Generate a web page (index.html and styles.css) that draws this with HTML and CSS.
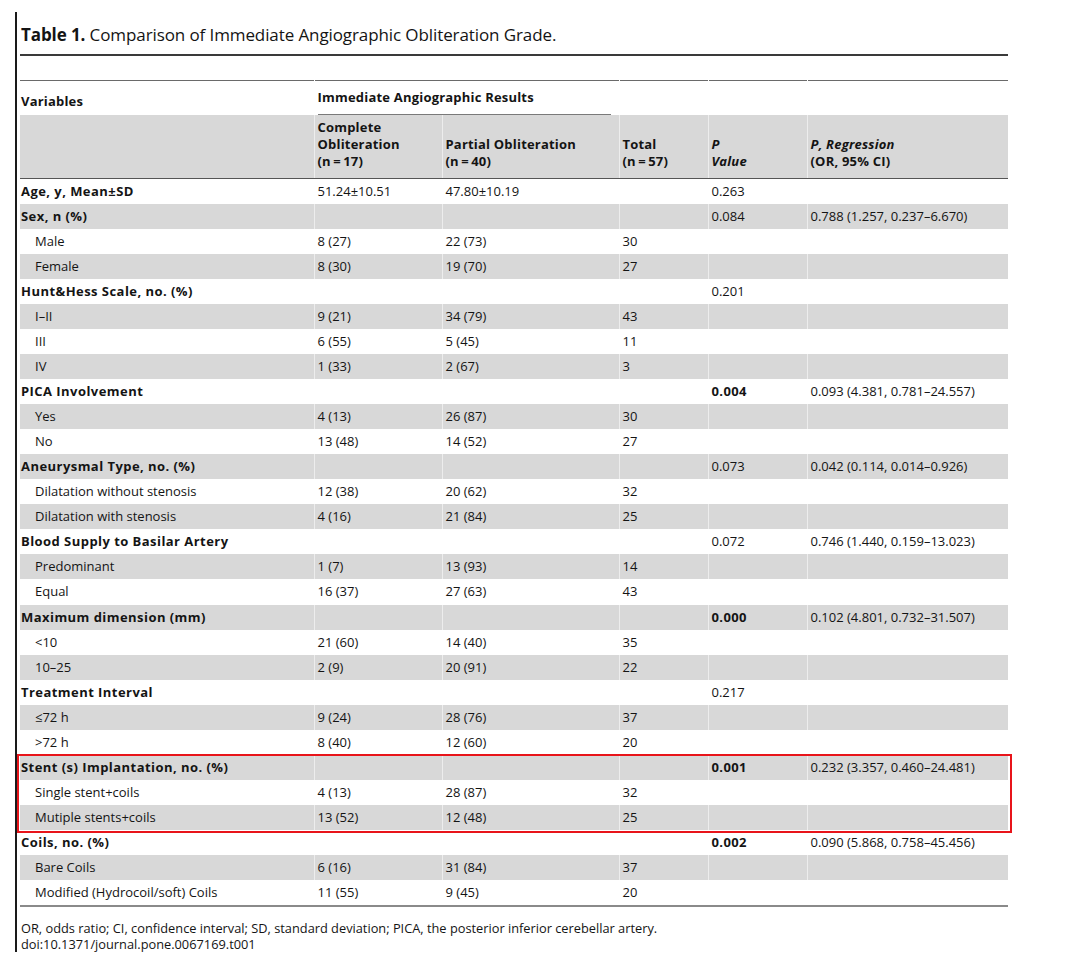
FILE: index.html
```html
<!DOCTYPE html>
<html>
<head>
<meta charset="utf-8">
<link rel="stylesheet" href="styles.css">
</head>
<body>
<div class="page">
  <div class="title"><b>Table 1.</b> Comparison of Immediate Angiographic Obliteration Grade.</div>
  <div class="title-rule"></div>
  <div class="table-wrap">
  <table class="data">
    <colgroup>
      <col class="c1"><col class="c2"><col class="c3"><col class="c4"><col class="c5"><col class="c6">
    </colgroup>
    <thead>
      <tr class="h1">
        <th class="var-head">Variables</th>
        <th colspan="2" class="group-head"><div class="group-label">Immediate Angiographic Results</div></th>
        <th></th><th></th><th></th>
      </tr>
      <tr class="h2">
        <th></th>
        <th>Complete<br>Obliteration<br>(n&thinsp;=&thinsp;17)</th>
        <th>Partial Obliteration<br>(n&thinsp;=&thinsp;40)</th>
        <th>Total<br>(n&thinsp;=&thinsp;57)</th>
        <th><i>P</i><br><i>Value</i></th>
        <th><i>P, Regression</i><br>(OR, 95% CI)</th>
      </tr>
    </thead>
    <tbody>
      <tr><td class="cat">Age, y, Mean±SD</td><td>51.24±10.51</td><td>47.80±10.19</td><td></td><td>0.263</td><td></td></tr>
      <tr><td class="cat">Sex, n (%)</td><td></td><td></td><td></td><td>0.084</td><td>0.788 (1.257, 0.237–6.670)</td></tr>
      <tr><td class="sub">Male</td><td>8 (27)</td><td>22 (73)</td><td>30</td><td></td><td></td></tr>
      <tr><td class="sub">Female</td><td>8 (30)</td><td>19 (70)</td><td>27</td><td></td><td></td></tr>
      <tr><td class="cat">Hunt&amp;Hess Scale, no. (%)</td><td></td><td></td><td></td><td>0.201</td><td></td></tr>
      <tr><td class="sub">I–II</td><td>9 (21)</td><td>34 (79)</td><td>43</td><td></td><td></td></tr>
      <tr><td class="sub">III</td><td>6 (55)</td><td>5 (45)</td><td>11</td><td></td><td></td></tr>
      <tr><td class="sub">IV</td><td>1 (33)</td><td>2 (67)</td><td>3</td><td></td><td></td></tr>
      <tr><td class="cat">PICA Involvement</td><td></td><td></td><td></td><td><b>0.004</b></td><td>0.093 (4.381, 0.781–24.557)</td></tr>
      <tr><td class="sub">Yes</td><td>4 (13)</td><td>26 (87)</td><td>30</td><td></td><td></td></tr>
      <tr><td class="sub">No</td><td>13 (48)</td><td>14 (52)</td><td>27</td><td></td><td></td></tr>
      <tr><td class="cat">Aneurysmal Type, no. (%)</td><td></td><td></td><td></td><td>0.073</td><td>0.042 (0.114, 0.014–0.926)</td></tr>
      <tr><td class="sub">Dilatation without stenosis</td><td>12 (38)</td><td>20 (62)</td><td>32</td><td></td><td></td></tr>
      <tr><td class="sub">Dilatation with stenosis</td><td>4 (16)</td><td>21 (84)</td><td>25</td><td></td><td></td></tr>
      <tr><td class="cat">Blood Supply to Basilar Artery</td><td></td><td></td><td></td><td>0.072</td><td>0.746 (1.440, 0.159–13.023)</td></tr>
      <tr><td class="sub">Predominant</td><td>1 (7)</td><td>13 (93)</td><td>14</td><td></td><td></td></tr>
      <tr><td class="sub">Equal</td><td>16 (37)</td><td>27 (63)</td><td>43</td><td></td><td></td></tr>
      <tr><td class="cat">Maximum dimension (mm)</td><td></td><td></td><td></td><td><b>0.000</b></td><td>0.102 (4.801, 0.732–31.507)</td></tr>
      <tr><td class="sub">&lt;10</td><td>21 (60)</td><td>14 (40)</td><td>35</td><td></td><td></td></tr>
      <tr><td class="sub">10–25</td><td>2 (9)</td><td>20 (91)</td><td>22</td><td></td><td></td></tr>
      <tr><td class="cat">Treatment Interval</td><td></td><td></td><td></td><td>0.217</td><td></td></tr>
      <tr><td class="sub">≤72 h</td><td>9 (24)</td><td>28 (76)</td><td>37</td><td></td><td></td></tr>
      <tr><td class="sub">&gt;72 h</td><td>8 (40)</td><td>12 (60)</td><td>20</td><td></td><td></td></tr>
      <tr><td class="cat">Stent (s) Implantation, no. (%)</td><td></td><td></td><td></td><td><b>0.001</b></td><td>0.232 (3.357, 0.460–24.481)</td></tr>
      <tr><td class="sub">Single stent+coils</td><td>4 (13)</td><td>28 (87)</td><td>32</td><td></td><td></td></tr>
      <tr><td class="sub">Mutiple stents+coils</td><td>13 (52)</td><td>12 (48)</td><td>25</td><td></td><td></td></tr>
      <tr><td class="cat">Coils, no. (%)</td><td></td><td></td><td></td><td><b>0.002</b></td><td>0.090 (5.868, 0.758–45.456)</td></tr>
      <tr><td class="sub">Bare Coils</td><td>6 (16)</td><td>31 (84)</td><td>37</td><td></td><td></td></tr>
      <tr><td class="sub">Modified (Hydrocoil/soft) Coils</td><td>11 (55)</td><td>9 (45)</td><td>20</td><td></td><td></td></tr>
    </tbody>
  </table>
  <div class="highlight"></div>
  </div>
  <div class="notes">
    <div>OR, odds ratio; CI, confidence interval; SD, standard deviation; PICA, the posterior inferior cerebellar artery.</div>
    <div>doi:10.1371/journal.pone.0067169.t001</div>
  </div>
</div>
</body>
</html>
```

FILE: styles.css
```css
html, body {
  margin: 0;
  padding: 0;
  background: #fff;
}
body {
  font-family: "Open Sans", "Liberation Sans", sans-serif;
  color: #141414;
}
.page {
  margin: 12px 0 0 15px;
  border-left: 2px solid #1a1a1a;
  padding-left: 3px;
  width: 988px;
}
.title {
  font-size: 17px;
  line-height: 22px;
  padding-top: 12px;
  padding-left: 1px;
  letter-spacing: -0.1px;
}
.title b { font-weight: 700; }
.title-rule {
  margin-top: 8px;
  height: 2px;
  background: #3a3a3a;
}
.table-wrap {
  position: relative;
  margin-top: 24px;
}
.data {
  width: 988px;
  border-collapse: collapse;
  table-layout: fixed;
  font-size: 13px;
  border-top: 1px solid #6a6a6a;
  border-bottom: 2px solid #8a8a8a;
}
.c1 { width: 294px; }
.c2 { width: 128px; }
.c3 { width: 177px; }
.c4 { width: 89px; }
.c5 { width: 99px; }
.c6 { width: 201px; }
.data th, .data td {
  padding: 0 0 0 3px;
  text-align: left;
  white-space: nowrap;
}
.data td + td, .data th + th {
  border-left: 1px solid rgba(255,255,255,0.55);
}
.h1 { height: 34px; }
.h1 th {
  font-weight: 700;
  vertical-align: top;
  letter-spacing: 0.2px;
}
.var-head {
  padding-top: 12px !important;
  padding-left: 1px !important;
  line-height: 17px;
}
.group-head {
  padding-top: 8px !important;
}
.group-label {
  border-bottom: 1px solid #7a7a7a;
  padding-bottom: 8px;
  margin-right: 8px;
  line-height: 17px;
}
.h2 { height: 63px; }
.h2 th {
  background: #d8d8d8;
  vertical-align: bottom;
  padding-bottom: 8px;
  line-height: 17px;
  font-weight: 700;
  letter-spacing: 0.2px;
  border-bottom: 1px solid #555;
}
.data tbody tr { height: 25.07px; }
.data tbody td {
  line-height: 25px;
  padding-top: 0;
  padding-bottom: 0;
}
.data tbody tr:nth-child(even) td {
  background: #d8d8d8;
}
.data td.cat {
  font-weight: 700;
  padding-left: 1px;
  letter-spacing: 0.45px;
}
.data td.sub {
  padding-left: 15px;
}
.data td b {
  letter-spacing: 0.4px;
}
.highlight {
  position: absolute;
  left: -3px;
  top: 674px;
  width: 995px;
  height: 79px;
  box-sizing: border-box;
  border: 2px solid #e8141a;
  pointer-events: none;
}
.notes {
  margin-top: 13px;
  font-size: 12.8px;
  line-height: 16px;
  padding-left: 1px;
}
```
